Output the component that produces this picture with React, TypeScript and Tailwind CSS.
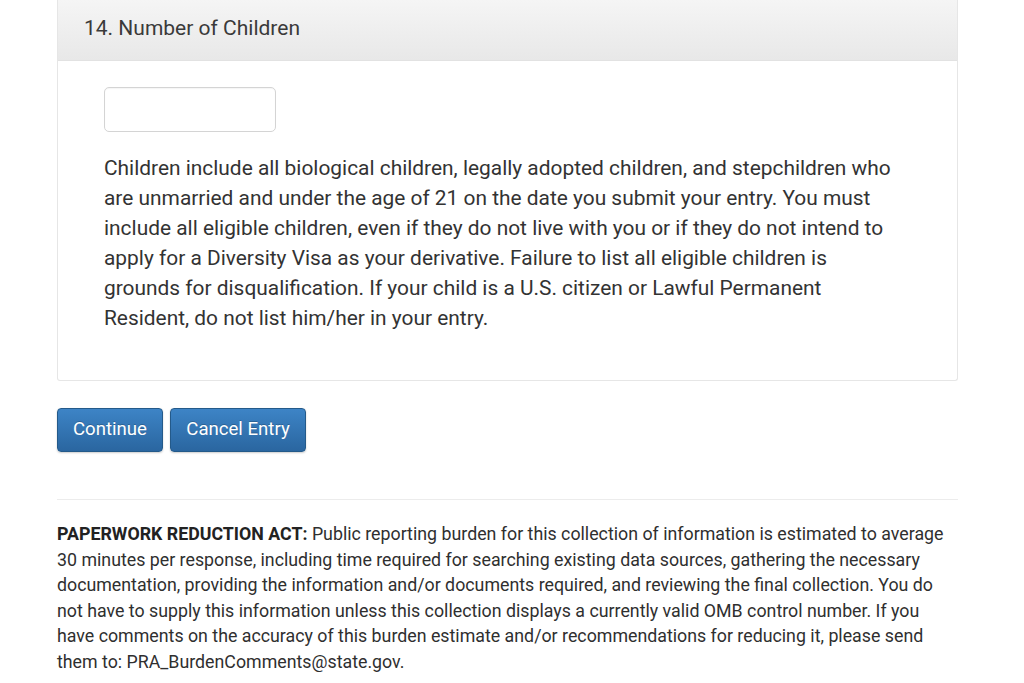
import React from 'react';

export default function App() {
  return (
    <div className="min-h-screen bg-white text-[#333] font-['Roboto','Liberation_Sans',sans-serif]">
      <div className="ml-[57px] w-[901px]">
        {/* Question panel */}
        <section className="border border-t-0 border-[#e6e6e6] rounded-b-[3px]">
          <header className="h-[61px] pl-[26px] pt-[14px] bg-gradient-to-b from-[#f5f5f5] to-[#e8e8e8] border-b border-[#e2e2e2]">
            <h2 className="text-[21px] leading-[28px] text-[#3a3a3a]">14. Number of Children</h2>
          </header>
          <div className="pl-[46px] pt-[26px] pb-[47px]">
            <input
              type="text"
              className="block w-[172px] h-[45px] border border-[#d4d4d4] rounded-[5px] bg-white shadow-[inset_0_1px_1px_rgba(0,0,0,0.04)] outline-none"
            />
            <p className="mt-[21px] w-[802px] text-[20.9px] leading-[30px] text-[#333]">
              Children include all biological children, legally adopted children, and stepchildren who are unmarried and under the age of 21 on the date you submit your entry. You must include all eligible children, even if they do not live with you or if they do not intend to apply for a Diversity Visa as your derivative. Failure to list all eligible children is grounds for disqualification. If your child is a U.S. citizen or Lawful Permanent Resident, do not list him/her in your entry.
            </p>
          </div>
        </section>

        {/* Actions */}
        <div className="flex gap-[7px] mt-[27px]">
          <button className="h-[44px] w-[106px] rounded-[4px] border border-[#245a8a] bg-gradient-to-b from-[#3d84c6] to-[#2a66a0] text-white text-[18.6px] [text-shadow:0_-1px_0_rgba(0,0,0,0.2)] shadow-[0_1px_2px_rgba(0,0,0,0.2)]">
            Continue
          </button>
          <button className="h-[44px] w-[136px] rounded-[4px] border border-[#245a8a] bg-gradient-to-b from-[#3d84c6] to-[#2a66a0] text-white text-[18.6px] [text-shadow:0_-1px_0_rgba(0,0,0,0.2)] shadow-[0_1px_2px_rgba(0,0,0,0.2)]">
            Cancel Entry
          </button>
        </div>

        <hr className="mt-[47px] border-0 border-t border-[#ececec]" />

        {/* Paperwork notice */}
        <p className="mt-[21px] w-[900px] text-[17.8px] leading-[25.5px] text-[#2f2f2f]">
          <strong className="font-bold text-[#222]">PAPERWORK REDUCTION ACT:</strong> Public reporting burden for this collection of information is estimated to average 30 minutes per response, including time required for searching existing data sources, gathering the necessary documentation, providing the information and/or documents required, and reviewing the final collection. You do not have to supply this information unless this collection displays a currently valid OMB control number. If you have comments on the accuracy of this burden estimate and/or recommendations for reducing it, please send them to: PRA_BurdenComments@state.gov.
        </p>
      </div>
    </div>
  );
}
